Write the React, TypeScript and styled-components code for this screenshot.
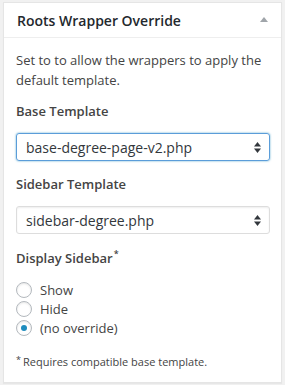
import React from 'react'
import styled, { createGlobalStyle } from 'styled-components'

const Global = createGlobalStyle`
  html, body {
    margin: 0;
    padding: 0;
    background: #f1f1f1;
    font-family: "Open Sans", "Noto Sans", sans-serif;
    color: #444;
  }
`

const Page = styled.div`
  width: 285px;
  height: 385px;
  padding: 2px 3px 0 3px;
  box-sizing: border-box;
`

const Panel = styled.div`
  background: #fff;
  border: 1px solid #e5e5e5;
  box-shadow: 0 1px 1px rgba(0, 0, 0, 0.04);
  height: 381px;
  box-sizing: border-box;
`

const Header = styled.div`
  display: flex;
  align-items: center;
  justify-content: space-between;
  height: 34px;
  padding: 0 13px 0 13px;
  border-bottom: 1px solid #eee;
`

const Title = styled.h2`
  margin: 0;
  font-size: 14px;
  font-weight: 600;
  color: #23282d;
`

const Toggle = styled.span`
  width: 0;
  height: 0;
  border-left: 4px solid transparent;
  border-right: 4px solid transparent;
  border-bottom: 5px solid #a0a5aa;
  margin-top: -1px;
`

const Body = styled.div`
  padding: 13px 12px 0 12px;
`

const Desc = styled.p`
  margin: 0;
  font-size: 13px;
  line-height: 19.5px;
`

const Label = styled.div<{ top: number }>`
  margin-top: ${(p) => p.top}px;
  font-size: 13px;
  font-weight: 600;
  line-height: 18px;
  color: #444;

  sup {
    font-size: 9px;
    vertical-align: 6px;
    line-height: 0;
    margin-left: 1px;
  }
`

const SelectBox = styled.div<{ focused?: boolean }>`
  margin-top: 13px;
  width: 254px;
  height: 28px;
  box-sizing: border-box;
  border: 1px solid ${(p) => (p.focused ? '#5b9dd9' : '#ddd')};
  box-shadow: ${(p) =>
    p.focused ? '0 0 2px rgba(30, 140, 190, 0.8)' : 'inset 0 1px 2px rgba(0,0,0,0.07)'};
  border-radius: 3px;
  display: flex;
  align-items: center;
  justify-content: space-between;
  padding: 0 8px 0 9px;
  font-size: 14px;
  color: #32373c;
`

const Arrows = styled.svg`
  width: 7px;
  height: 11px;
`

const Radios = styled.div`
  margin-top: 13px;
  display: flex;
  flex-direction: column;
`

const RadioRow = styled.label`
  display: flex;
  align-items: center;
  height: 19px;
  font-size: 13px;
  color: #444;
`

const Circle = styled.span<{ checked?: boolean }>`
  width: 16px;
  height: 16px;
  box-sizing: border-box;
  border-radius: 50%;
  border: 1px solid #b4b9be;
  box-shadow: inset 0 1px 2px rgba(0, 0, 0, 0.1);
  margin-right: 8px;
  display: flex;
  align-items: center;
  justify-content: center;

  &::after {
    content: '';
    display: ${(p) => (p.checked ? 'block' : 'none')};
    width: 6px;
    height: 6px;
    border-radius: 50%;
    background: #1e8cbe;
  }
`

const Note = styled.div`
  margin-top: 17px;
  font-size: 11px;
  line-height: 16px;
  color: #444;

  sup {
    font-size: 9px;
    vertical-align: 3px;
    line-height: 0;
    margin-right: 2px;
  }
`

const SelectArrows = () => (
  <Arrows viewBox="0 0 7 11">
    <path d="M3.5 0 L7 4.5 H0 Z" fill="#32373c" />
    <path d="M3.5 11 L7 6.5 H0 Z" fill="#32373c" />
  </Arrows>
)

const Radio = ({ text, checked }: { text: string; checked?: boolean }) => (
  <RadioRow>
    <Circle checked={checked} />
    {text}
  </RadioRow>
)

export default function App() {
  return (
    <>
      <Global />
      <Page>
        <Panel>
          <Header>
            <Title>Roots Wrapper Override</Title>
            <Toggle />
          </Header>
          <Body>
            <Desc>Set to to allow the wrappers to apply the default template.</Desc>

            <Label top={12}>Base Template</Label>
            <SelectBox focused>
              <span>base-degree-page-v2.php</span>
              <SelectArrows />
            </SelectBox>

            <Label top={14}>Sidebar Template</Label>
            <SelectBox>
              <span>sidebar-degree.php</span>
              <SelectArrows />
            </SelectBox>

            <Label top={15}>
              Display Sidebar<sup>*</sup>
            </Label>
            <Radios>
              <Radio text="Show" />
              <Radio text="Hide" />
              <Radio text="(no override)" checked />
            </Radios>

            <Note>
              <sup>*</sup>Requires compatible base template.
            </Note>
          </Body>
        </Panel>
      </Page>
    </>
  )
}
